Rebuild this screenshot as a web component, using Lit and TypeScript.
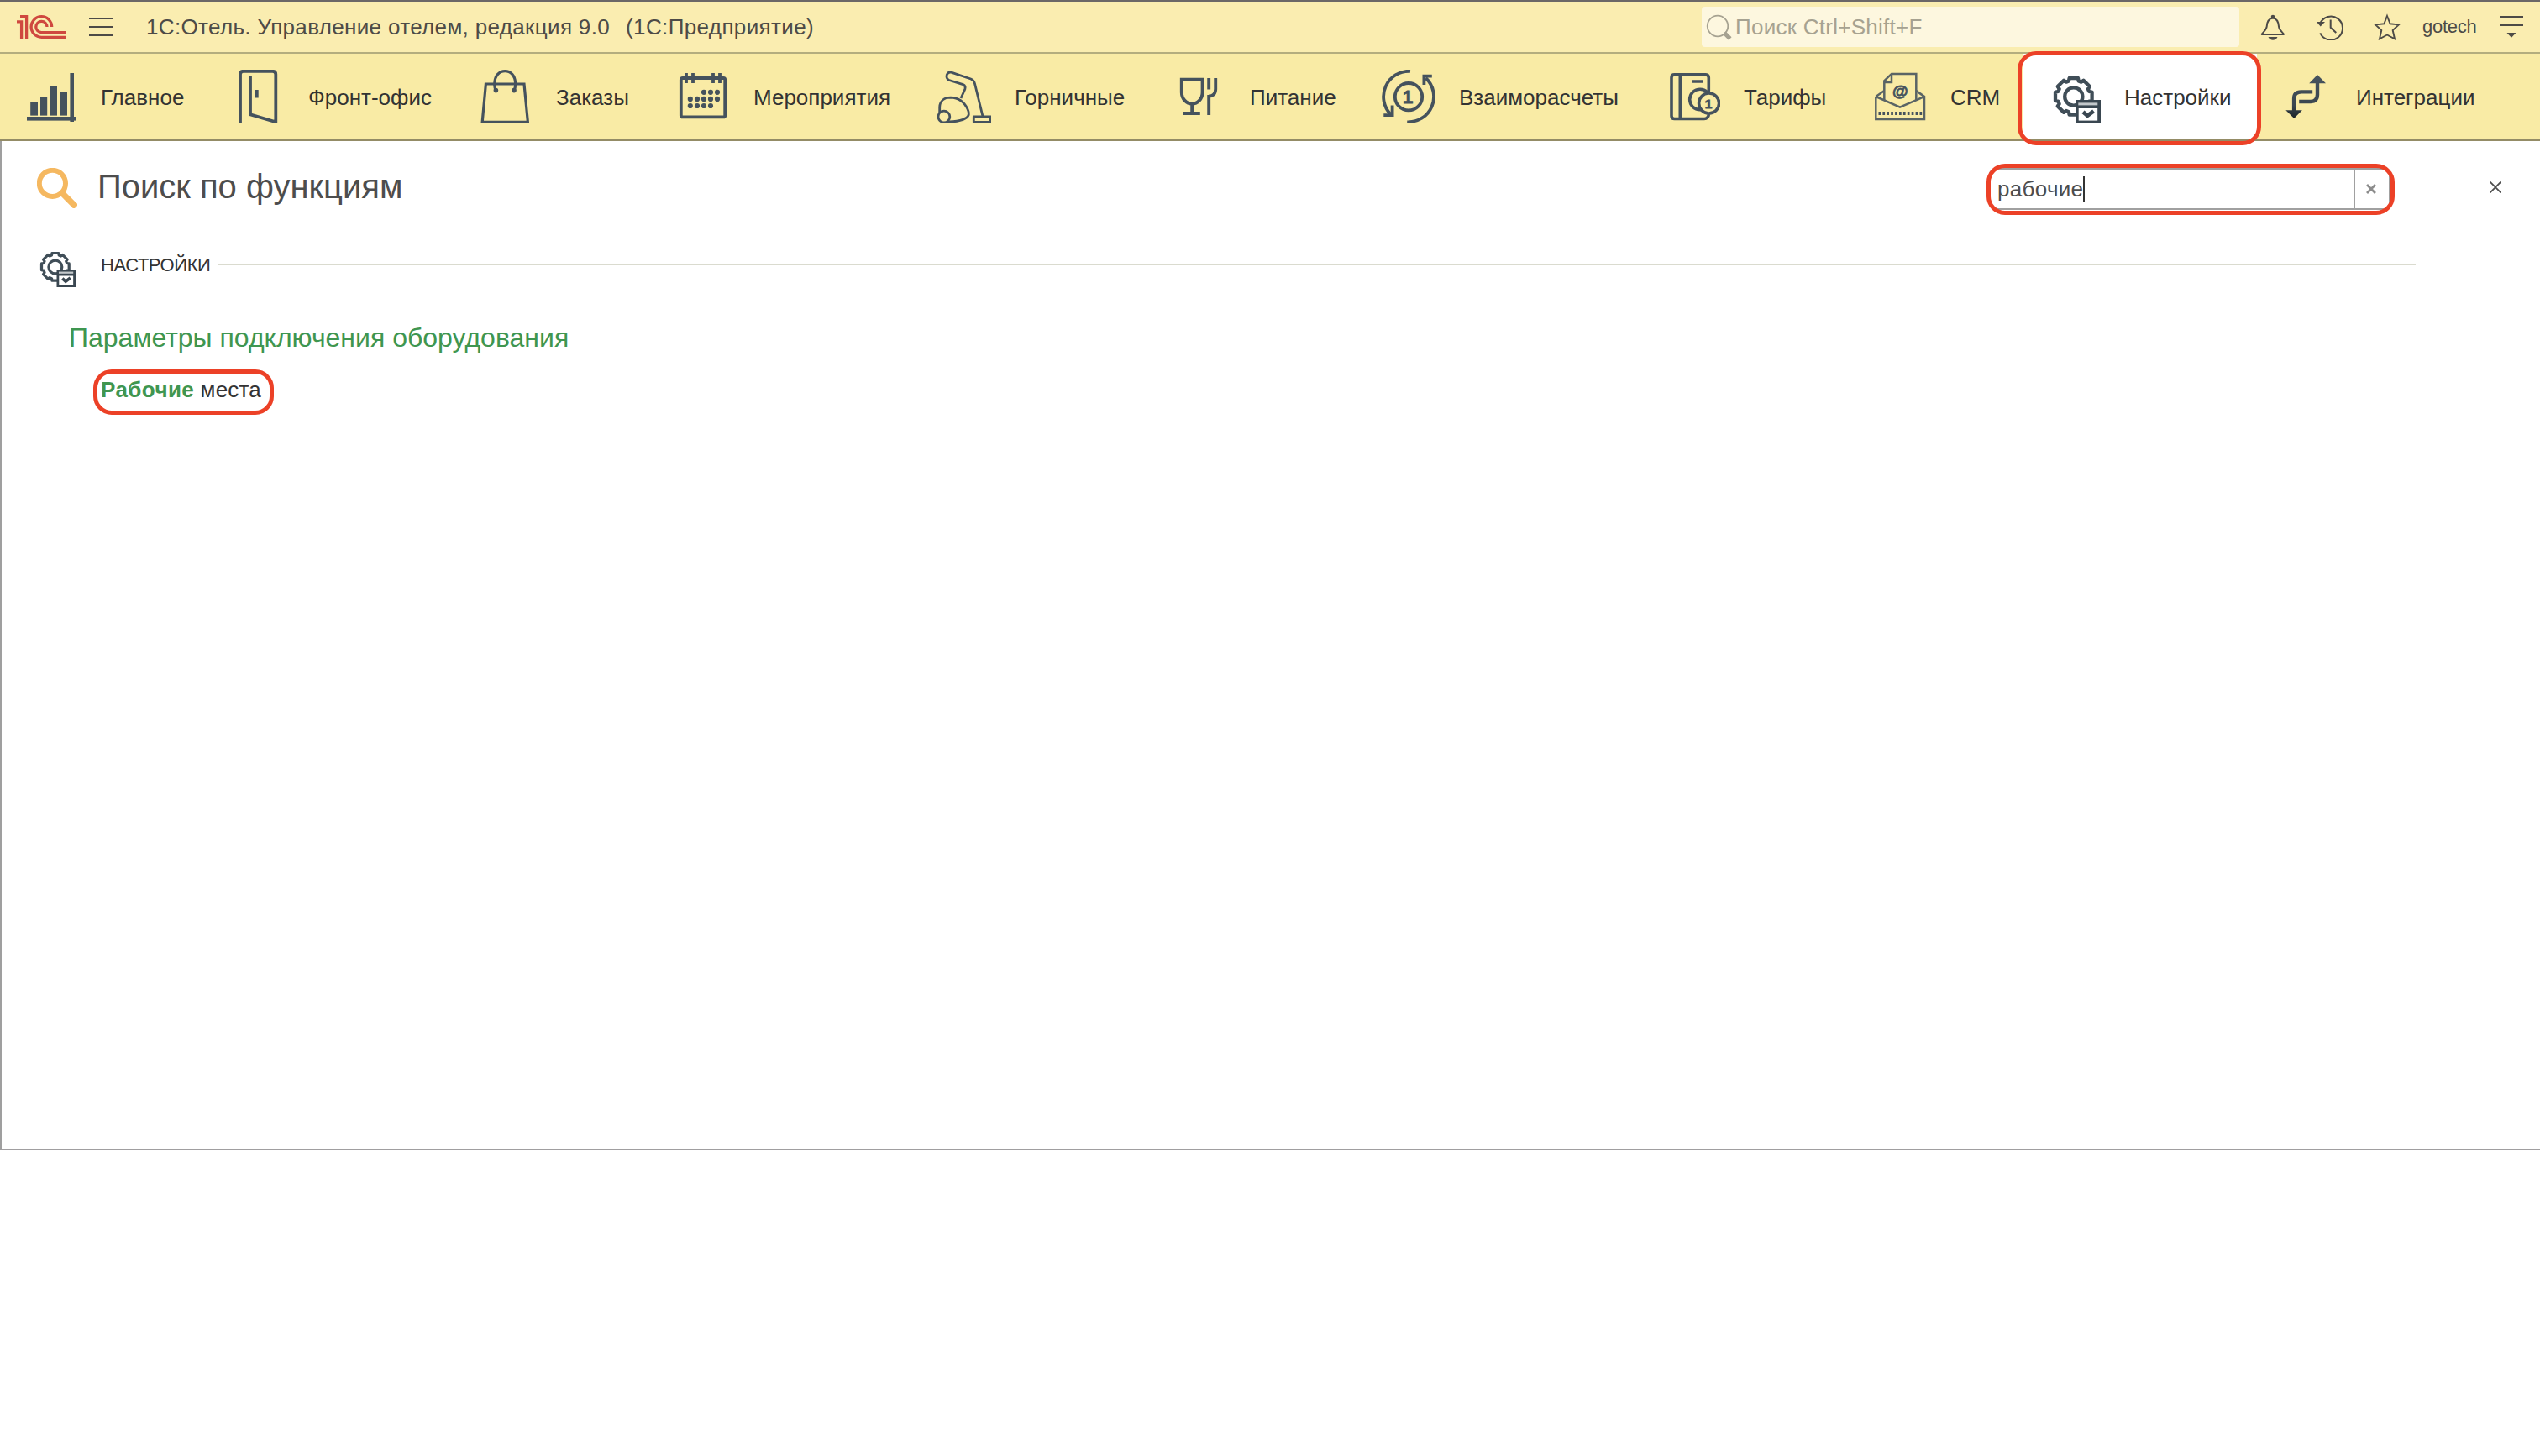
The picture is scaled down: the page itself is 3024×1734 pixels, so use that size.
import { LitElement, html, svg, css, TemplateResult } from "lit";
import { customElement, property } from "lit/decorators.js";
import { classMap } from "lit/directives/class-map.js";

/** Outline of an eight-toothed gear centred on (c, c). */
function gearPath(c: number, base: number, tip: number, half: number): string {
  const points: string[] = [];
  for (let k = 0; k < 8; k++) {
    const a = (k * Math.PI) / 4;
    const local = [
      [-half - 0.6, base],
      [-half, tip],
      [half, tip],
      [half + 0.6, base],
    ];
    for (const [t, r] of local) {
      const x = c + r * Math.sin(a) + t * Math.cos(a);
      const y = c - r * Math.cos(a) + t * Math.sin(a);
      points.push(`${x.toFixed(2)} ${y.toFixed(2)}`);
    }
  }
  return `M${points.join("L")}Z`;
}

const INK = "#45525d";

const ICONS: Record<string, TemplateResult> = {
  chart: svg`
    <g fill=${INK}>
      <rect x="4" y="56" width="58" height="4.6"/>
      <rect x="8.2" y="38" width="8.8" height="16.6"/>
      <rect x="20" y="32" width="8.2" height="22.6"/>
      <rect x="32" y="20" width="8" height="34.6"/>
      <rect x="43.8" y="26" width="8.2" height="28.6"/>
      <rect x="55.4" y="4" width="4.6" height="58"/>
    </g>`,
  door: svg`
    <g fill="none" stroke=${INK} stroke-width="3.8">
      <path d="M11 64V5.5Q11 1.8 14.7 1.8H49.5Q53.3 1.8 53.3 5.5V62.2L23 53.4V8"/>
      <path d="M30.8 24v9.5"/>
    </g>`,
  bag: svg`
    <g fill="none" stroke=${INK} stroke-width="3.2">
      <path d="M8.4 17H54L58.4 62.4H4.2Z"/>
      <path d="M20.5 24.5Q18.6 22 18.8 16C19.2 7 24.5 1.6 31.2 1.6S43.3 7 43.6 16Q43.7 22 41.9 24.5"/>
    </g>
    <g fill=${INK}><circle cx="20.4" cy="24.6" r="2.8"/><circle cx="42" cy="24.6" r="2.8"/></g>`,
  calendar: svg`
    <g fill="none" stroke=${INK} stroke-width="3.8">
      <rect x="5.8" y="10" width="52.4" height="46.4" rx="2"/>
      <path d="M12 4v12M20 4v12M44 4v12M52 4v12"/>
    </g>
    <g fill=${INK}>
      ${[[33, 26.8], [41, 26.8], [49, 26.8], [16.8, 34.9], [25, 34.9], [33, 34.9], [41, 34.9], [49, 34.9],
        [16.8, 43], [25, 43], [33, 43], [41, 43]].map(([x, y]) => svg`<circle cx=${x} cy=${y} r="3.1"/>`)}
    </g>`,
  vacuum: svg`
    <g fill="none" stroke=${INK} stroke-width="2.8" stroke-linejoin="round">
      <path d="M54 55.5L44.5 16.5Q43.5 12.3 39.8 11L16.5 3.2Q13 2.2 11.3 6Q10 10.5 14 12.5L30.5 17.6Q34.2 19.2 32.8 23.2L28 34"/>
      <path d="M2.7 52V44.5C3 37 8.5 33.2 15.7 33.2C26 33.5 32 38.5 36 47C39 53.5 37 57 30.5 59.4Q23 62.2 11 61.8"/>
      <circle cx="7.9" cy="56" r="6.9"/>
      <rect x="43.3" y="55.8" width="20" height="6.6"/>
    </g>`,
  dining: svg`
    <g fill="none" stroke=${INK} stroke-width="3.9">
      <path d="M10.8 11.6H35.6V27C35.6 34.5 30 40.6 23.2 40.6S10.8 34.5 10.8 27Z"/>
      <path d="M23.2 40V52M13 52H32.8"/>
      <path d="M43.2 10V23.5M51.2 10V23C51.2 28.5 48 31.5 43.2 31.5M43.2 30V54"/>
    </g>`,
  settlement: svg`
    <g fill="none" stroke=${INK} stroke-width="3.8">
      <circle cx="32" cy="32.2" r="16.2"/>
      <path d="M34 1.8A30.3 30.3 0 0 0 10.5 53"/>
      <path d="M2.3 54.2H12.6V42.5"/>
      <path d="M30.2 62.3A30.3 30.3 0 0 0 52.5 10"/>
      <path d="M59.8 7.6H50.4V18"/>
    </g>
    <text class="digit" x="31" y="39.8" font-size="22" text-anchor="middle" fill=${INK} stroke=${INK} stroke-width="0.9">1</text>`,
  tariffs: svg`
    <g fill="none" stroke=${INK} stroke-width="3.6">
      <path d="M50.5 53Q49.5 58.5 45 58.5H9.5Q6 58.5 6 55V9.5Q6 5.9 9.5 5.9H46.5Q50.3 5.9 50.3 9.5V27"/>
      <path d="M16.3 6V58M30.5 14H44"/>
      <circle cx="40" cy="35.5" r="12.3"/>
      <circle cx="50.6" cy="40" r="12" class="coin"/>
    </g>
    <text class="digit" x="50" y="45.8" font-size="15.5" text-anchor="middle" fill=${INK} stroke=${INK} stroke-width="0.9">1</text>`,
  crm: svg`
    <g fill="none" stroke=${INK} stroke-width="2.5" opacity="0.88">
      <path d="M3.3 32V59H61V32L51.3 25M3.3 32L13.3 25M3.3 32L32 44.7L61 32"/>
      <path d="M13.3 36V13.3L22 4.9H51.3V36M22 4.9V15H13.3"/>
    </g>
    <path d="M6.5 52H58.5" stroke=${INK} stroke-width="4" stroke-dasharray="2.7 2.2"/>
    <text class="digit" x="32.2" y="31.6" font-size="19" text-anchor="middle" fill=${INK} stroke=${INK} stroke-width="0.8">@</text>`,
  settings: svg`
    <g fill="none" stroke="#404e58" stroke-width="4.3" stroke-linejoin="round">
      <path d=${gearPath(31.8, 18.4, 21.8, 5.2)}/>
      <circle cx="31.8" cy="32" r="10.6"/>
    </g>
    <rect x="34" y="36" width="30" height="28" fill="#3a4751"/>
    <rect x="37.3" y="39.4" width="23" height="3" fill="#c3c8cb"/>
    <rect x="37.7" y="46" width="22.5" height="14.6" fill="#fff"/>
    <path d="M43 50.3L48.2 54.8L55.6 49.4" fill="none" stroke="#3a4751" stroke-width="4.8"/>`,
  integrations: svg`
    <defs><linearGradient id="fade" x1="0" y1="0" x2="0" y2="1">
      <stop offset="0" stop-color="#47545f"/><stop offset="0.7" stop-color="#3a464f"/><stop offset="1" stop-color="#1c2328"/>
    </linearGradient></defs>
    <path fill="url(#fade)" d="M46 6L56 16.2H48.2V30Q48.2 40.2 38 40.2H24.2V35.8H37.5Q43.8 35.8 43.8 29.5V16.2H36.2Z
      M18.2 58L8.3 48.2H15.9V34.5Q15.9 24.2 26.5 24.2H40.2V28.6H27Q20.3 28.6 20.3 35V48.2H27.9Z"/>`,
};

@customElement("hotel-icon")
class HotelIcon extends LitElement {
  @property() name = "";
  @property({ type: Number }) size = 64;

  static styles = css`
    :host { display: block; flex: none; line-height: 0; }
    svg { display: block; }
    .digit { font-family: "Liberation Sans", Arial, sans-serif; font-weight: 700; }
    .coin { fill: #f9eba5; }
  `;

  render() {
    return html`<svg width=${this.size} height=${this.size} viewBox="0 0 64 64">${ICONS[this.name]}</svg>`;
  }
}

const SECTIONS = [
  { icon: "chart", label: "Главное" },
  { icon: "door", label: "Фронт-офис" },
  { icon: "bag", label: "Заказы" },
  { icon: "calendar", label: "Мероприятия" },
  { icon: "vacuum", label: "Горничные" },
  { icon: "dining", label: "Питание" },
  { icon: "settlement", label: "Взаиморасчеты" },
  { icon: "tariffs", label: "Тарифы" },
  { icon: "crm", label: "CRM" },
  { icon: "settings", label: "Настройки", active: true },
  { icon: "integrations", label: "Интеграции" },
];

@customElement("app-root")
class AppRoot extends LitElement {
  static styles = css`
    :host {
      display: block;
      width: 3024px;
      height: 1734px;
      overflow: hidden;
      background: #fff;
      color: #333;
      font: 26px/30px "Liberation Sans", Arial, sans-serif;
    }
    svg { display: block; flex: none; }
    .titlebar {
      display: flex;
      align-items: center;
      box-sizing: border-box;
      height: 64px;
      padding: 0 20px;
      border-top: 2px solid #6b6767;
      border-bottom: 2px solid #b4ad7e;
      background: #faedb0;
      color: #4d4b47;
    }
    .burger { margin-left: 28px; }
    .title { margin-left: 40px; white-space: pre; letter-spacing: 0.34px; }
    .edition { margin-left: 19px; white-space: pre; letter-spacing: 0.38px; }
    .search {
      display: flex;
      align-items: center;
      box-sizing: border-box;
      width: 640px;
      height: 48px;
      margin-left: auto;
      padding-left: 4px;
      border-radius: 4px;
      background: #fdf7df;
      color: #a6a291;
    }
    .search-text { margin-left: 4px; letter-spacing: 0.26px; }
    .bell { margin-left: 24px; }
    .tool { margin-left: 36px; }
    .user { width: 67px; margin: -1px 0 0 26px; font-size: 22px; letter-spacing: -0.25px; }
    .menu { margin-left: 25px; }

    .nav {
      display: grid;
      grid-template-columns: 247px 295px 235px 311px 280px 249px 339px 246px 207px 276px 1fr;
      height: 102px;
      border-bottom: 2px solid #948c66;
      background: #f9eba5;
    }
    .section {
      position: relative;
      display: flex;
      align-items: center;
      padding-left: 28px;
      white-space: nowrap;
    }
    .section.active { margin-right: -2px; background: #fff; }
    .label { margin-left: 28px; padding-top: 2px; }
    .ring {
      position: absolute;
      box-sizing: border-box;
      border: 5px solid #ec4127;
      border-radius: 22px;
      pointer-events: none;
    }
    .section .ring { inset: -3px -5px -7px -7px; z-index: 1; }

    .panel {
      box-sizing: border-box;
      height: 1202px;
      padding-top: 32px;
      border-left: 2px solid #9f9f9f;
      border-bottom: 2px solid #a09ea0;
      background: #fff;
    }
    .head { display: flex; align-items: flex-start; height: 50px; padding: 0 46px 0 42px; }
    .heading { margin: -1px auto 0 24px; color: #4d4d4d; font-size: 40px; font-weight: 400; line-height: 46px; }
    .field {
      position: relative;
      display: flex;
      box-sizing: border-box;
      width: 478px;
      height: 50px;
      margin-right: 118px;
      border: 2px solid #a0a0a0;
      border-radius: 8px;
      color: #4d4d4d;
    }
    .field .ring { inset: -7px -7px -8px -5px; }
    .value { flex: 1; display: flex; padding: 8px 0 0 8px; letter-spacing: 0.3px; }
    .caret { width: 2px; height: 30px; background: #333; }
    .clear {
      display: flex;
      align-items: center;
      justify-content: center;
      box-sizing: border-box;
      width: 42px;
      padding-right: 2px;
      border-left: 2px solid #a0a0a0;
    }
    .close { margin-top: 16px; }

    .group { display: flex; align-items: flex-start; margin: 44px 148px 0 40px; }
    .group-name {
      width: 140px;
      margin: 9px 0 0 30px;
      font-size: 22px;
      line-height: 26px;
      letter-spacing: -0.45px;
      white-space: nowrap;
    }
    .rule { flex: 1; height: 2px; margin-top: 20px; background: #dadbcf; }
    .subhead { margin: 42px 0 0 80px; color: #3f9650; font-size: 32px; line-height: 37px; }
    .results { display: flex; margin: 28px 0 0 117px; }
    .result { position: relative; padding-left: 1px; white-space: pre; letter-spacing: 0.15px; }
    .result .ring { left: -8px; top: -9px; width: 215px; height: 54px; }
    .match { color: #3f9650; font-weight: 700; letter-spacing: 0.42px; }
  `;

  private renderTitlebar() {
    return html`
      <header class="titlebar">
        <svg width="58" height="32" viewBox="20 16 58 32" fill="none" stroke="#cf483f" stroke-width="3.3">
          <path d="M20 25.8H25.6V46"/>
          <path d="M24 19.6H31.6V46"/>
          <path d="M61.7 32A12.3 12.3 0 1 0 49.4 44.3H78"/>
          <path d="M56 32A6.6 6.6 0 1 0 49.4 38.6H78"/>
        </svg>
        <svg class="burger" width="28" height="22" viewBox="0 0 28 22" fill="#4d4b47">
          <rect width="28" height="2"/><rect y="10" width="28" height="2"/><rect y="20" width="28" height="2"/>
        </svg>
        <span class="title">1С:Отель. Управление отелем, редакция 9.0</span>
        <span class="edition">(1С:Предприятие)</span>
        <div class="search">
          <svg width="32" height="32" viewBox="0 0 32 32" fill="none" stroke="#a6a291">
            <circle cx="15" cy="15" r="12.3" stroke-width="1.8"/>
            <path d="M22.8 23L29.8 30" stroke-width="5"/>
          </svg>
          <span class="search-text">Поиск Ctrl+Shift+F</span>
        </div>
        <svg class="bell" width="32" height="32" viewBox="0 0 32 32" fill="none" stroke="#4d4b47" stroke-width="2">
          <path d="M2.8 25C3 23 8.3 20.5 8.7 15.5C9 9.5 11 6 16 5.4C21 6 22.6 9.5 23 15.5C23.4 20.5 28.6 23 28.9 25Z" stroke-linejoin="round"/>
          <circle cx="16" cy="4" r="1.3" fill="#4d4b47"/>
          <path d="M10.5 28H21.5Q19.5 31.8 16 31.8T10.5 28Z" fill="#4d4b47" stroke="none"/>
        </svg>
        <svg class="tool" width="32" height="32" viewBox="0 0 32 32" fill="none" stroke="#4d4b47" stroke-width="2">
          <path d="M4.2 12A14 14 0 1 1 4.3 23.3"/>
          <path d="M0 10H10L4.7 15.6Z" fill="#4d4b47" stroke="none"/>
          <path d="M16.7 7.5V16.8L23.3 23"/>
        </svg>
        <svg class="tool" width="32" height="32" viewBox="0 0 32 32" fill="none" stroke="#4d4b47" stroke-width="1.9">
          <path d="M16 3L19.6 12.3L29.8 13.4L22.7 20L25 30.3L16 25.5L7 30.3L9.3 20L2.2 13.4L12.4 12.3Z"/>
        </svg>
        <span class="user">gotech</span>
        <svg class="menu" width="28" height="26" viewBox="0 0 28 26" fill="#4d4b47">
          <rect width="28" height="2"/><rect y="10" width="28" height="2"/><path d="M8.5 20H19.5L14 25.8Z"/>
        </svg>
      </header>
    `;
  }

  render() {
    return html`
      ${this.renderTitlebar()}
      <nav class="nav">
        ${SECTIONS.map(
          (s) => html`
            <div class=${classMap({ section: true, active: !!s.active })}>
              <hotel-icon name=${s.icon}></hotel-icon>
              <span class="label">${s.label}</span>
              ${s.active ? html`<div class="ring"></div>` : ""}
            </div>
          `
        )}
      </nav>
      <main class="panel">
        <div class="head">
          <svg width="48" height="48" viewBox="0 0 48 48" fill="none" stroke="#f5b860">
            <circle cx="18.4" cy="18.4" r="15.6" stroke-width="6"/>
            <path d="M29.5 29.5L46.5 46.5" stroke-width="7.4"/>
          </svg>
          <h1 class="heading">Поиск по функциям</h1>
          <div class="field">
            <div class="value"><span>рабочие</span><span class="caret"></span></div>
            <div class="clear">
              <svg width="14" height="14" viewBox="0 0 14 14" stroke="#8c8c8c" stroke-width="2.8">
                <path d="M2 2L12 12M12 2L2 12"/>
              </svg>
            </div>
            <div class="ring"></div>
          </div>
          <svg class="close" width="14" height="14" viewBox="0 0 14 14" stroke="#4d4d4d" stroke-width="1.8">
            <path d="M0.5 0.5L13.5 13.5M13.5 0.5L0.5 13.5"/>
          </svg>
        </div>
        <div class="group">
          <hotel-icon name="settings" size="48"></hotel-icon>
          <span class="group-name">НАСТРОЙКИ</span>
          <div class="rule"></div>
        </div>
        <div class="subhead">Параметры подключения оборудования</div>
        <div class="results">
          <div class="result"><span class="match">Рабочие</span> места<div class="ring"></div></div>
        </div>
      </main>
    `;
  }
}
